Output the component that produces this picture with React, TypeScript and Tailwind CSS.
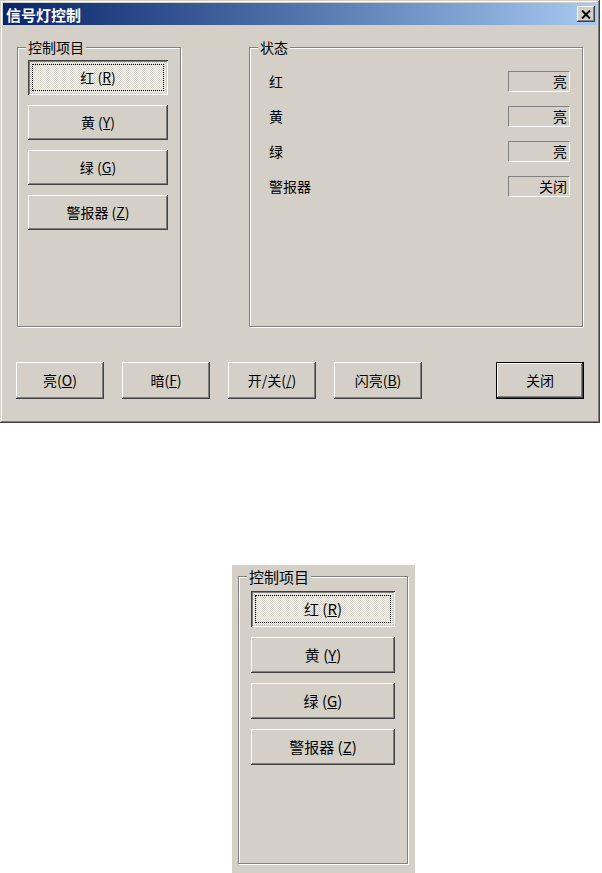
import type { ReactNode } from 'react';

const raised =
    'shadow-[inset_-1px_-1px_#404040,inset_1px_1px_#ffffff,inset_-2px_-2px_#808080,inset_2px_2px_#d4d0c8]';
const sunkenChecked =
    'shadow-[inset_1px_1px_#404040,inset_-1px_-1px_#ffffff,inset_2px_2px_#808080,inset_-2px_-2px_#d4d0c8] bg-[image:repeating-conic-gradient(#ffffff_0_25%,#d4d0c8_0_50%)] bg-[length:2px_2px] outline-1 outline-dotted outline-black outline-offset-[-5px]';
const etched = 'border border-[#808080] shadow-[inset_1px_1px_#ffffff,1px_1px_#ffffff]';

const controlItems = [
    { name: '红', key: 'R' },
    { name: '黄', key: 'Y' },
    { name: '绿', key: 'G' },
    { name: '警报器', key: 'Z' },
];

const states = [
    { name: '红', value: '亮' },
    { name: '黄', value: '亮' },
    { name: '绿', value: '亮' },
    { name: '警报器', value: '关闭' },
];

const actions = [
    { name: '亮', key: 'O' },
    { name: '暗', key: 'F' },
    { name: '开/关', key: '/' },
    { name: '闪亮', key: 'B' },
];

function Label({ name, hotkey, spaced }: { name: string; hotkey: string; spaced?: boolean }) {
    return (
        <span>
            {name}
            {spaced ? ' ' : ''}(<u>{hotkey}</u>)
        </span>
    );
}

function Group({
    title,
    className,
    bodyClass,
    legendClass,
    children,
}: {
    title: string;
    className: string;
    bodyClass: string;
    legendClass: string;
    children: ReactNode;
}) {
    return (
        <fieldset className={`${etched} ${className}`}>
            <legend className={`ml-[8px] px-[2px] bg-[#d4d0c8] ${legendClass}`}>{title}</legend>
            <div className={bodyClass}>{children}</div>
        </fieldset>
    );
}

function ControlButtons({ size }: { size: 'main' | 'zoom' }) {
    const btn = size === 'main' ? 'w-[140px] h-[35px] text-[14px]' : 'w-[144px] h-[36px] text-[15px]';
    return (
        <div className="flex flex-col gap-[10px]">
            {controlItems.map((item, i) => (
                <button
                    key={item.key}
                    className={`${btn} flex items-center justify-center bg-[#d4d0c8] text-black ${i === 0 ? sunkenChecked : raised}`}
                >
                    <Label name={item.name} hotkey={item.key} spaced />
                </button>
            ))}
        </div>
    );
}

export default function App() {
    return (
        <div className="w-[602px] h-[873px] bg-white overflow-hidden font-['Noto_Sans_CJK_SC',sans-serif] text-black">
            <div className="w-[600px] h-[423px] bg-[#d4d0c8] p-[3px] flex flex-col shadow-[inset_-1px_-1px_#404040,inset_1px_1px_#d4d0c8,inset_-2px_-2px_#808080,inset_2px_2px_#ffffff]">
                <div className="h-[22px] flex items-center justify-between pl-[3px] pr-[2px] bg-linear-to-r from-[#0a246a] to-[#a6caf0]">
                    <span className="text-white font-bold text-[15px] leading-none">信号灯控制</span>
                    <button className={`w-[18px] h-[16px] flex items-center justify-center bg-[#d4d0c8] ${raised}`}>
                        <svg width="10" height="9" viewBox="0 0 10 9">
                            <path d="M1 0.5 L9 8.5 M9 0.5 L1 8.5" stroke="#000" strokeWidth="2" />
                        </svg>
                    </button>
                </div>

                <div className="flex-1 flex flex-col px-[13px]">
                    <div className="mt-[14px] flex justify-between mx-px">
                        <Group
                            title="控制项目"
                            className="w-[164px] h-[288px]"
                            bodyClass="pl-[10px] pt-[5px]"
                            legendClass="text-[14px] leading-[16px]"
                        >
                            <ControlButtons size="main" />
                        </Group>

                        <Group
                            title="状态"
                            className="w-[334px] h-[288px]"
                            bodyClass="pl-[19px] pr-[12px] pt-[16px]"
                            legendClass="text-[14px] leading-[16px]"
                        >
                            <div className="flex flex-col gap-[14px]">
                                {states.map((s) => (
                                    <div key={s.name} className="flex items-center justify-between h-[21px] text-[14px]">
                                        <span>{s.name}</span>
                                        <span className="w-[62px] h-[21px] flex items-center justify-end pr-[2px] border border-t-[#808080] border-l-[#808080] border-b-white border-r-white">
                                            {s.value}
                                        </span>
                                    </div>
                                ))}
                            </div>
                        </Group>
                    </div>

                    <div className="mt-[35px] flex gap-[18px] text-[14px]">
                        {actions.map((a) => (
                            <button key={a.key} className={`w-[88px] h-[37px] flex items-center justify-center bg-[#d4d0c8] ${raised}`}>
                                <Label name={a.name} hotkey={a.key} />
                            </button>
                        ))}
                        <button className={`ml-auto w-[88px] h-[37px] flex items-center justify-center bg-[#d4d0c8] border border-black ${raised}`}>
                            关闭
                        </button>
                    </div>
                </div>
            </div>

            <div className="ml-[232px] mt-[142px] w-[183px] h-[308px] bg-[#d4d0c8] pl-[6px] pt-[3px]">
                <Group
                    title="控制项目"
                    className="w-[170px] h-[296px]"
                    bodyClass="pl-[12px] pt-[6px]"
                    legendClass="text-[15px] leading-[17px]"
                >
                    <ControlButtons size="zoom" />
                </Group>
            </div>
        </div>
    );
}
